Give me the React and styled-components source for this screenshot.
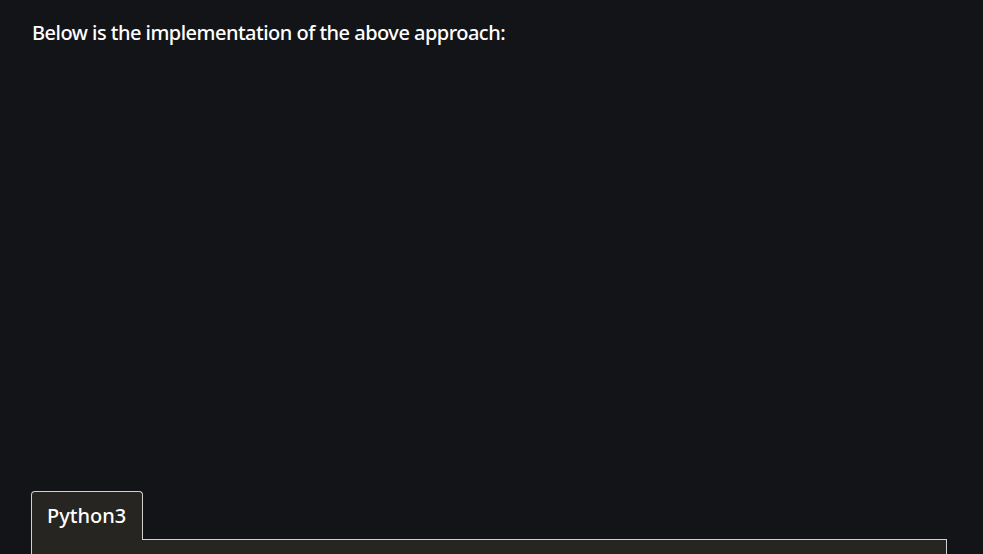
import React from "react";
import styled, { createGlobalStyle } from "styled-components";

const Global = createGlobalStyle`
  html, body { margin: 0; padding: 0; background: #131417; }
  body { font-family: "Noto Sans", "Liberation Sans", sans-serif; overflow: hidden; }
`;

const Page = styled.div`
  width: 983px;
  height: 554px;
  box-sizing: border-box;
  padding: 18px 36px 0 31px;
  overflow: hidden;
`;

const Lead = styled.p`
  margin: 0 0 0 1px;
  color: #ffffff;
  font-size: 20px;
  font-weight: 500;
  line-height: 30px;
  letter-spacing: -0.52px;
`;

const Spacer = styled.div`
  height: 443px;
`;

const Tabs = styled.div`
  display: flex;
  align-items: flex-end;
`;

const Tab = styled.div`
  box-sizing: border-box;
  width: 112px;
  height: 49px;
  background: #262522;
  border: 1px solid #d0d0d0;
  border-bottom: none;
  border-radius: 4px 4px 0 0;
  color: #ffffff;
  font-size: 20px;
  font-weight: 500;
  padding: 10px 0 0 15px;
  line-height: 28px;
`;

const TabRest = styled.div`
  flex: 1;
  border-bottom: 1px solid #d0d0d0;
`;

const CodePanel = styled.div`
  height: 60px;
  background: #262522;
  border: 1px solid #d0d0d0;
  border-top: none;
`;

export default function App() {
  return (
    <>
      <Global />
      <Page>
        <Lead>Below is the implementation of the above approach:</Lead>
        <Spacer />
        <Tabs>
          <Tab>Python3</Tab>
          <TabRest />
        </Tabs>
        <CodePanel />
      </Page>
    </>
  );
}
